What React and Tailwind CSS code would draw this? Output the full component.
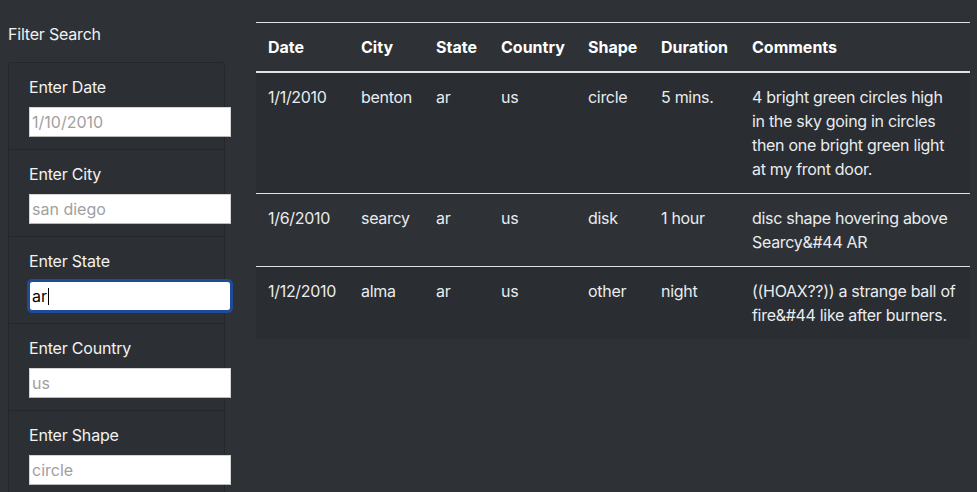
import React from 'react';

const rows = [
  { date: '1/1/2010', city: 'benton', state: 'ar', country: 'us', shape: 'circle', duration: '5 mins.', comments: '4 bright green circles high in the sky going in circles then one bright green light at my front door.' },
  { date: '1/6/2010', city: 'searcy', state: 'ar', country: 'us', shape: 'disk', duration: '1 hour', comments: 'disc shape hovering above Searcy&#44 AR' },
  { date: '1/12/2010', city: 'alma', state: 'ar', country: 'us', shape: 'other', duration: 'night', comments: '((HOAX??)) a strange ball of fire&#44 like after burners.' },
];

const filters = [
  { label: 'Enter Date', placeholder: '1/10/2010' },
  { label: 'Enter City', placeholder: 'san diego' },
  { label: 'Enter State', placeholder: 'ar', value: 'ar', focused: true },
  { label: 'Enter Country', placeholder: 'us' },
  { label: 'Enter Shape', placeholder: 'circle' },
];

const headers = [
  ['Date', 'w-[93px]'],
  ['City', 'w-[75px]'],
  ['State', 'w-[65px]'],
  ['Country', 'w-[87px]'],
  ['Shape', 'w-[73px]'],
  ['Duration', 'w-[91px]'],
  ['Comments', 'w-[230px]'],
];

export default function App() {
  return (
    <div className="min-h-screen bg-[#2e3236] text-[#e9ecef] font-['Inter',sans-serif] text-base leading-6 flex">
      <aside className="w-[256px] shrink-0 pt-[22px]">
        <h5 className="pl-2 mb-4 text-[16px] leading-6 tracking-[-0.2px] text-[#f1f1f1]">Filter Search</h5>
        <ul className="ml-2 w-[217px] border border-[#24282c] rounded-[4px] bg-[#2c3034]">
          {filters.map((f, i) => (
            <li
              key={f.label}
              className={`px-[20px] pt-3 pb-3 ${i > 0 ? 'border-t border-[#24282c]' : ''}`}
            >
              <label className="block mb-2 tracking-[-0.2px] text-[#f2f2f2]">{f.label}</label>
              {f.focused ? (
                <div className="relative w-[202px]">
                  <input
                    type="text"
                    defaultValue={f.value}
                    className="block w-[202px] h-[30px] px-[2px] bg-white text-black text-base border border-[#c9c9c9] rounded-[3px] outline-[3px] outline-solid outline-[#1d4c9a] -outline-offset-1"
                  />
                  <span className="absolute left-[19px] top-[7px] w-px h-[17px] bg-black" />
                </div>
              ) : (
                <input
                  type="text"
                  placeholder={f.placeholder}
                  className="block w-[202px] h-[30px] px-[2px] bg-white text-black text-base border border-[#d4d4d4] border-b-[#b9b9b9] placeholder:text-[#a0a0a0] outline-none"
                />
              )}
            </li>
          ))}
        </ul>
      </aside>

      <main className="pt-[22px]">
        <table className="w-[714px] table-fixed border-collapse text-left">
          <thead>
            <tr className="border-t border-[#dee2e6] border-b-2 border-b-[#dee2e6]">
              {headers.map(([h, w]) => (
                <th key={h} className={`${w} px-3 py-3 font-bold text-white align-bottom`}>{h}</th>
              ))}
            </tr>
          </thead>
          <tbody className="tracking-[-0.3px]">
            {rows.map((r, i) => (
              <tr
                key={r.date}
                className={`${i > 0 ? 'border-t border-[#dee2e6]' : ''} ${i % 2 === 0 ? 'bg-[#2a2d31]' : ''}`}
              >
                <td className="px-3 py-3 align-top">{r.date}</td>
                <td className="px-3 py-3 align-top">{r.city}</td>
                <td className="px-3 py-3 align-top">{r.state}</td>
                <td className="px-3 py-3 align-top">{r.country}</td>
                <td className="px-3 py-3 align-top">{r.shape}</td>
                <td className="px-3 py-3 align-top">{r.duration}</td>
                <td className="px-3 py-3 align-top">{r.comments}</td>
              </tr>
            ))}
          </tbody>
        </table>
      </main>
    </div>
  );
}
